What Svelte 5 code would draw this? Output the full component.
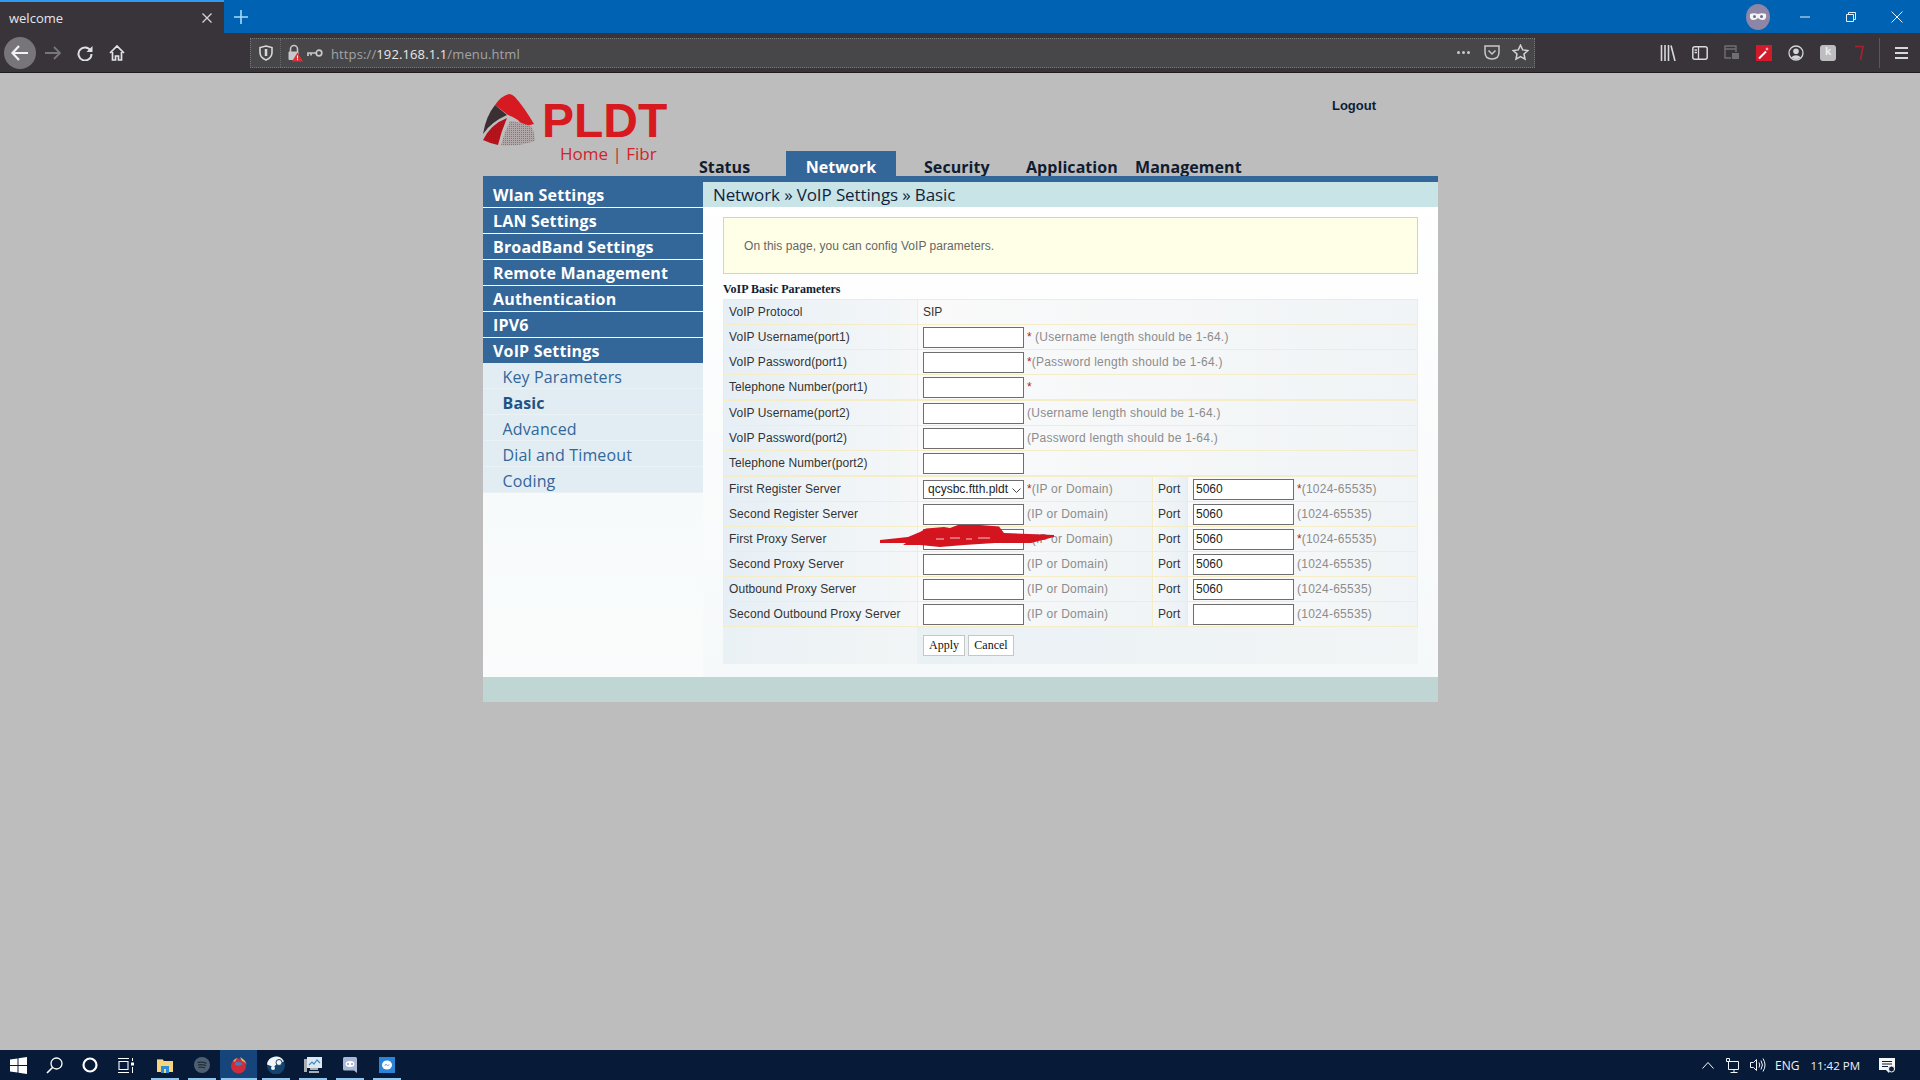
<script>
  const tabs = ['Status', 'Network', 'Security', 'Application', 'Management'];
  const menu = ['Wlan Settings', 'LAN Settings', 'BroadBand Settings', 'Remote Management', 'Authentication', 'IPV6', 'VoIP Settings'];
  const submenu = ['Key Parameters', 'Basic', 'Advanced', 'Dial and Timeout', 'Coding'];

  const accountRows = [
    { label: 'VoIP Username(port1)', star: '* ', hint: '(Username length should be 1-64.)' },
    { label: 'VoIP Password(port1)', star: '*', hint: '(Password length should be 1-64.)' },
    { label: 'Telephone Number(port1)', star: '*', hint: '', end: true },
    { label: 'VoIP Username(port2)', star: '', hint: '(Username length should be 1-64.)' },
    { label: 'VoIP Password(port2)', star: '', hint: '(Password length should be 1-64.)' },
    { label: 'Telephone Number(port2)', star: '', hint: '', end: true }
  ];

  const serverRows = [
    { label: 'First Register Server', star: true, port: '5060', select: true },
    { label: 'Second Register Server', star: false, port: '5060' },
    { label: 'First Proxy Server', star: true, port: '5060' },
    { label: 'Second Proxy Server', star: false, port: '5060' },
    { label: 'Outbound Proxy Server', star: false, port: '5060' },
    { label: 'Second Outbound Proxy Server', star: false, port: '' }
  ];

  // running-app underlines on the taskbar
  const docks = [151, 188, 221, 262, 299, 336, 373];
</script>

<div class="screen">
  <div class="tabstrip">
    <div class="tab">
      <span class="tab-title">welcome</span>
      <svg class="tab-close" width="12" height="12" viewBox="0 0 12 12"><path d="M1.5 1.5l9 9M10.5 1.5l-9 9" stroke="#d4d4d6" stroke-width="1.3"/></svg>
    </div>
    <svg class="newtab" width="14" height="14" viewBox="0 0 14 14"><path d="M7 0v14M0 7h14" stroke="#a5ddfb" stroke-width="1.6"/></svg>
    <div class="grow"></div>
    <svg class="mask" width="24" height="26" viewBox="0 0 24 26">
      <ellipse cx="12" cy="13" rx="12" ry="13" fill="#8d86a6"/>
      <path d="M4 10q4-1.500 8 0q4-1.500 8 0q1 6-3.500 6q-2.500 0-4.500-2q-2 2-4.500 2q-4.500 0-3.500-6z" fill="#f4f4f6"/>
      <circle cx="8.500" cy="12.500" r="1.500" fill="#6f6a88"/><circle cx="15.500" cy="12.500" r="1.500" fill="#6f6a88"/>
    </svg>
    <div class="winbtn"><svg width="12" height="12" viewBox="0 0 12 12"><path d="M1 6h10" stroke="#e6eef6" stroke-width="1"/></svg></div>
    <div class="winbtn"><svg width="12" height="12" viewBox="0 0 12 12"><path d="M1.500 3.500h7v7h-7zM3.500 3.500v-2h7v7h-2" fill="none" stroke="#e6eef6" stroke-width="1"/></svg></div>
    <div class="winbtn"><svg width="12" height="12" viewBox="0 0 12 12"><path d="M.5.500l11 11M11.500.500l-11 11" stroke="#e6eef6" stroke-width="1"/></svg></div>
  </div>

  <div class="navbar">
    <div class="tool back">
      <svg width="18" height="16" viewBox="0 0 18 16"><path d="M8 1L1.500 8L8 15M2 8h15" fill="none" stroke="#f2f2f2" stroke-width="2.200"/></svg>
    </div>
    <div class="tool">
      <svg width="16" height="14" viewBox="0 0 16 14"><path d="M9 1l6 6l-6 6M15 7H0" fill="none" stroke="#77777a" stroke-width="1.800"/></svg>
    </div>
    <div class="tool">
      <svg width="16" height="16" viewBox="0 0 16 16"><path d="M13.500 5.500A6.500 6.500 0 1 0 14.500 9" fill="none" stroke="#e0e0e2" stroke-width="2"/><path d="M15.500 1v6h-6z" fill="#e0e0e2"/></svg>
    </div>
    <div class="tool">
      <svg width="16" height="16" viewBox="0 0 16 16"><path d="M1 8l7-7l7 7M3.500 7v8h3v-4h3v4h3v-8" fill="none" stroke="#e4e4e6" stroke-width="1.700"/></svg>
    </div>

    <div class="urlbar">
      <div class="url-shield">
        <svg width="14" height="16" viewBox="0 0 14 16"><path d="M7 1l6 1.500v5q0 5-6 7.500q-6-2.500-6-7.500v-5z" fill="none" stroke="#d8d8da" stroke-width="1.600"/><path d="M7 4v7" stroke="#d8d8da" stroke-width="2.500"/></svg>
      </div>
      <svg class="url-lock" width="16" height="18" viewBox="0 0 16 18">
        <path d="M3.500 8V5a3.500 3.500 0 0 1 7 0v3" fill="none" stroke="#c8c8ca" stroke-width="1.600"/>
        <rect x="1.500" y="7.500" width="10" height="8.500" rx="1" fill="#c8c8ca"/>
        <path d="M10.500 8.500l5.500 9h-11z" fill="#d8323c"/><path d="M10.500 11.500v3M10.500 15.200v1" stroke="#fff" stroke-width="1"/>
      </svg>
      <svg class="url-key" width="16" height="10" viewBox="0 0 16 10"><circle cx="12" cy="5" r="2.800" fill="none" stroke="#c8c8ca" stroke-width="1.700"/><path d="M9 5H1v3M4 5v2.500" fill="none" stroke="#c8c8ca" stroke-width="1.700"/></svg>
      <span class="url-text">https://<b>192.168.1.1</b>/menu.html</span>
      <div class="grow"></div>
      <span class="url-dots"><i></i><i></i><i></i></span>
      <svg class="url-act" width="16" height="15" viewBox="0 0 16 15"><path d="M1 1h14v6q0 7-7 7t-7-7z" fill="none" stroke="#c9c9cb" stroke-width="1.500"/><path d="M4.500 5.500L8 9l3.500-3.500" fill="none" stroke="#c9c9cb" stroke-width="1.500"/></svg>
      <svg class="url-act last" width="17" height="17" viewBox="0 0 17 17"><path d="M8.500 1.200l2.200 4.700l5.100.6l-3.800 3.500l1 5.100l-4.500-2.600l-4.500 2.600l1-5.100L1.200 6.500l5.100-.6z" fill="none" stroke="#d4d4d6" stroke-width="1.500"/></svg>
    </div>

    <div class="tools-right">
      <div class="tool"><svg width="16" height="16" viewBox="0 0 16 16"><path d="M1.500 0v16M5 0v16M8.500 0v16M11 .500l4 15.500" stroke="#d8d8da" stroke-width="1.600"/></svg></div>
      <div class="tool"><svg width="16" height="14" viewBox="0 0 16 14"><rect x=".800" y=".800" width="14.400" height="12.400" rx="2" fill="none" stroke="#d8d8da" stroke-width="1.500"/><path d="M6.500 1v12M2.500 4h2.500M2.500 6.500h2.500" stroke="#d8d8da" stroke-width="1.300"/></svg></div>
      <div class="tool"><svg width="16" height="15" viewBox="0 0 16 15"><path d="M7 13H1V1h11v6M1 4h11" fill="none" stroke="#6f6f72" stroke-width="1.400"/><rect x="8" y="8" width="7" height="6" fill="#6f6f72"/></svg></div>
      <div class="tool"><div class="ext-red"><svg width="16" height="16" viewBox="0 0 16 16"><path d="M3 13.500l7-7" stroke="#fff" stroke-width="2"/><path d="M11 2l.6 1.600L13 4l-1.400.6L11 6l-.6-1.400L9 4l1.400-.4z" fill="#f6d9d9"/></svg></div></div>
      <div class="tool"><svg width="16" height="16" viewBox="0 0 16 16"><circle cx="8" cy="8" r="7" fill="none" stroke="#d4d4d6" stroke-width="1.300"/><circle cx="8" cy="6.300" r="2.800" fill="#d4d4d6"/><path d="M3 12.500q5-4.500 10 0q-5 3.500-10 0z" fill="#d4d4d6"/></svg></div>
      <div class="tool"><div class="ext-grey"><span>k</span></div></div>
      <div class="tool"><svg width="12" height="16" viewBox="0 0 12 16"><path d="M1 1.500h8L6.500 15" fill="none" stroke="#a5222c" stroke-width="1.700"/></svg></div>
      <div class="divider"></div>
      <div class="tool burger"><i></i><i></i><i></i></div>
    </div>
  </div>

  <div class="page">
    <div class="router">
      <header class="head">
        <div class="logo">
          <svg class="mark" width="54" height="53" viewBox="0 0 54 53">
            <defs>
              <pattern id="dotsRed" width="2" height="2" patternUnits="userSpaceOnUse"><rect width="2" height="2" fill="#b5141d"/><rect width="1" height="1" fill="#5c3335"/></pattern>
              <pattern id="dotsGrey" width="2" height="2" patternUnits="userSpaceOnUse"><rect width="2" height="2" fill="#b0a8a8"/><rect width="1" height="1" fill="#8a7678"/></pattern>
            </defs>
            <path d="M26 0q3 0 6 3q9 10 19 27q-5 1-10 3Q35 24 25 21L12 11Q18 2 26 0z" fill="#d71921"/>
            <path d="M12 11L24 21Q8 28 0 40Q3 22 12 11z" fill="#3a3033"/>
            <path d="M24 24Q18 38 15 51Q6 49 0 46Q8 30 24 24z" fill="url(#dotsRed)"/>
            <path d="M27 27q12 1 22 6q3 7 3 14q-18 6-34 4q3-12 9-24z" fill="url(#dotsGrey)"/>
          </svg>
          <div class="wordmark">
            <div class="pldt">PLDT</div>
            <div class="fibr">Home | Fibr</div>
          </div>
        </div>
        <div class="head-right">
          <span class="logout">Logout</span>
          <nav class="tabs">
            {#each tabs as t}
              <span class="toptab" class:active={t === 'Network'}>{t}</span>
            {/each}
          </nav>
        </div>
      </header>

      <div class="body">
        <aside class="side">
          {#each menu as m}
            <div class="side-item">{m}</div>
          {/each}
          {#each submenu as s}
            <div class="side-sub" class:current={s === 'Basic'}>{s}</div>
          {/each}
        </aside>

        <main class="main">
          <div class="crumb">Network » VoIP Settings » Basic</div>
          <div class="panel">
            <div class="notice">On this page, you can config VoIP parameters.</div>
            <h3 class="section">VoIP Basic Parameters</h3>
            <div class="table-wrap">
              <table>
                <colgroup><col class="c1" /><col class="c2" /><col class="c3" /><col /></colgroup>
                <tbody>
                  <tr>
                    <td class="lab">VoIP Protocol</td>
                    <td class="val" colspan="3">SIP</td>
                  </tr>
                  {#each accountRows as r}
                    <tr class:end={r.end}>
                      <td class="lab">{r.label}</td>
                      <td class="val" colspan="3">
                        <div class="field">
                          <input type="text" />
                          <span class="star">{r.star}</span><span class="hint">{r.hint}</span>
                        </div>
                      </td>
                    </tr>
                  {/each}
                  {#each serverRows as r}
                    <tr>
                      <td class="lab">{r.label}</td>
                      <td class="val">
                        <div class="field">
                          {#if r.select}
                            <div class="select-box">
                              <select><option>qcysbc.ftth.pldt.com.ph</option></select>
                              <svg width="9" height="6" viewBox="0 0 9 6"><path d="M.5.500l4 4l4-4" fill="none" stroke="#444" stroke-width="1"/></svg>
                            </div>
                          {:else}
                            <input type="text" />
                          {/if}
                          <span class="star">{r.star ? '*' : ''}</span><span class="hint">(IP or Domain)</span>
                        </div>
                      </td>
                      <td class="lab port">Port</td>
                      <td class="val">
                        <div class="field">
                          <input type="text" value={r.port} />
                          <span class="star">{r.star ? '*' : ''}</span><span class="hint">(1024-65535)</span>
                        </div>
                      </td>
                    </tr>
                  {/each}
                  <tr class="actions">
                    <td></td>
                    <td colspan="3">
                      <div class="btns">
                        <button>Apply</button>
                        <button>Cancel</button>
                      </div>
                    </td>
                  </tr>
                </tbody>
              </table>
              <!-- red marker scribble over the proxy address -->
              <svg class="scribble" width="174" height="22" viewBox="0 0 174 22">
                <path d="M0 15L28 12L40 7L46 3.500L64 2L70 3L78 0L100 0L119 1.500L124 8L174 10L174 12L151 18L115 18L84 20L60 22L40 20L23 20L26 18L0 18z" fill="#d4141f"/>
                <path d="M56 14l8 0M70 13l10 0M86 14l6 0M98 13l12 0" stroke="#f0c8cb" stroke-width="1"/>
              </svg>
            </div>
          </div>
        </main>
      </div>
      <div class="foot"></div>
    </div>
  </div>

  <div class="taskbar">
    <div class="task"><svg width="17" height="17" viewBox="0 0 17 17"><path d="M0 2.500L7.500 1.400V8H0zM8.500 1.300L17 0v8H8.500zM0 9h7.500v6.600L0 14.500zM8.500 9H17v8l-8.500-1.300z" fill="#fff"/></svg></div>
    <div class="task"><svg width="17" height="17" viewBox="0 0 17 17"><circle cx="10.500" cy="6.500" r="5.500" fill="none" stroke="#fff" stroke-width="1.300"/><path d="M6.500 10.500L1 16" stroke="#fff" stroke-width="1.600"/></svg></div>
    <div class="task"><svg width="16" height="16" viewBox="0 0 16 16"><circle cx="8" cy="8" r="6.500" fill="none" stroke="#fff" stroke-width="2.200"/></svg></div>
    <div class="task"><svg width="16" height="15" viewBox="0 0 16 15"><path d="M0 .500h11M0 14.500h11M1 3.500h9v8H1z" fill="none" stroke="#fff" stroke-width="1.100"/><rect x="13" y="4.500" width="3" height="3" fill="#fff"/><path d="M14.500 0v3M14.500 9v6" stroke="#fff" stroke-width="1"/></svg></div>
    <div class="task app first"><svg width="18" height="15" viewBox="0 0 18 15"><path d="M1 1h5l2 2h9v11H1z" fill="#f6d57f"/><path d="M1 1h5l1 1H1z" fill="#e8734a"/><rect x="5" y="8" width="8" height="7" fill="#2c8fd8"/><rect x="8" y="11" width="2" height="4" fill="#f6d57f"/></svg></div>
    <div class="task app"><svg width="16" height="16" viewBox="0 0 16 16"><circle cx="8" cy="8" r="8" fill="#4e5f72"/><path d="M3.500 5.500q4.500-1.200 9 .8M4 8q4-1 8 .7M4.500 10.500q3.500-.8 6.500.5" fill="none" stroke="#22303e" stroke-width="1.300"/></svg></div>
    <div class="task app active"><svg width="18" height="18" viewBox="0 0 18 18"><circle cx="8.500" cy="10" r="7.500" fill="#cf2b3a"/><path d="M5 7q4-3 8 1q-3 3-8 1z" fill="#4f78b8"/><path d="M10 1q6 3 7 9q-1-4-5-5q-1-2-2-4z" fill="#f0b658"/><path d="M3 5q2-3 5-3q-2 1-3 4z" fill="#e8a24a"/></svg></div>
    <div class="task app"><svg width="18" height="18" viewBox="0 0 18 18"><path d="M0 10.500A9 9 0 1 0 .8 5.500z" fill="#12446f"/><path d="M0 8.500A9 9 0 0 1 17 5.500L11 7L6.500 11z" fill="#f2f5f8"/><circle cx="12" cy="6.500" r="3" fill="#f2f5f8" stroke="#12446f"/><circle cx="6" cy="12" r="2" fill="#f2f5f8"/></svg></div>
    <div class="task app"><svg width="18" height="18" viewBox="0 0 18 18"><rect x="3" y="1" width="15" height="11" fill="#dfe8ee"/><path d="M5 9l3-3l2 2l3-4l3 3" fill="none" stroke="#3d8fc9" stroke-width="1.200"/><rect x="0" y="3" width="3" height="13" fill="#a9b0b4"/><path d="M6 12h8v2H6zM5 15h10v2H5z" fill="#a9b0b4"/></svg></div>
    <div class="task app"><svg width="14" height="16" viewBox="0 0 14 16"><path d="M1.500 0h11A1.500 1.500 0 0 1 14 1.500V16l-3-2.500H1.500A1.500 1.500 0 0 1 0 12V1.500A1.500 1.500 0 0 1 1.500 0z" fill="#aab7d8"/><ellipse cx="7" cy="7" rx="4.500" ry="3" fill="#fff"/><circle cx="5" cy="7" r="1" fill="#8b9cc6"/><circle cx="9" cy="7" r="1" fill="#8b9cc6"/></svg></div>
    <div class="task app"><svg width="16" height="16" viewBox="0 0 16 16"><rect width="16" height="16" fill="#2b84d8"/><ellipse cx="8" cy="8" rx="5" ry="4.500" fill="#fff"/><path d="M5 9l2-2l1.500 1.200L11 7L9 9L7.500 8z" fill="#2b84d8"/></svg></div>
    <div class="grow"></div>
    <svg class="tray caret" width="12" height="7" viewBox="0 0 12 7"><path d="M.5 6.500l5.500-6l5.500 6" fill="none" stroke="#fff" stroke-width="1"/></svg>
    <svg class="tray net" width="16" height="15" viewBox="0 0 16 15"><path d="M3.500 3.500V.500h-3v3h12v8h-10v-8M8 11.500v3M4.500 14.500h7" fill="none" stroke="#f0f3f7" stroke-width="1"/></svg>
    <svg class="tray vol" width="16" height="14" viewBox="0 0 16 14"><path d="M.5 4.500h3l3-3v11l-3-3h-3zM9 4.500q1.500 2.500 0 5M11 2.500q2.800 4.500 0 9M13 .500q4 6.500 0 13" fill="none" stroke="#f0f3f7" stroke-width="1"/></svg>
    <span class="tray-text eng">ENG</span>
    <span class="tray-text clock">11:42 PM</span>
    <svg class="tray notif" width="16" height="15" viewBox="0 0 16 15"><path d="M0 0h16v12h-5l-1 3l-3-3H0z" fill="#f4f6f8"/><path d="M3 3.500h10M3 6h10M3 8.500h6" stroke="#0a1c38" stroke-width="1"/><circle cx="12.500" cy="11" r="3" fill="#0a1c38" stroke="#f4f6f8"/></svg>
    {#each docks as left, i}
      <span class="dock" class:wide={i === 2} style="left: {left}px"></span>
    {/each}
  </div>
</div>

<style>
  :global(body) {
    margin: 0;
    background: #bdbdbd;
  }

  .screen {
    position: relative;
    width: 1920px;
    height: 1080px;
    display: flex;
    flex-direction: column;
    overflow: hidden;
    font-family: "Liberation Sans", Arial, sans-serif;
  }

  .grow { flex: 1; }

  /* browser chrome */
  .tabstrip {
    height: 33px;
    background: #0062b3;
    display: flex;
    align-items: center;
    flex: none;
  }

  .tab {
    width: 224px;
    height: 33px;
    box-sizing: border-box;
    background: #38343a;
    border-top: 2px solid #2f9bef;
    display: flex;
    align-items: center;
    justify-content: space-between;
    padding: 0 11px 0 9px;
  }

  .tab-title {
    color: #e6e6e8;
    font: 13px "Open Sans", sans-serif;
  }

  .newtab { margin-left: 10px; }

  .mask { margin-right: 12px; }

  .winbtn {
    width: 46px;
    display: flex;
    justify-content: center;
    height: 33px;
    align-items: center;
  }

  .navbar {
    height: 40px;
    box-sizing: border-box;
    background: #38343a;
    border-bottom: 1px solid #1c1b1e;
    display: flex;
    align-items: center;
    padding-left: 4px;
    flex: none;
  }

  .tool {
    width: 32px;
    height: 32px;
    display: flex;
    align-items: center;
    justify-content: center;
    flex: none;
  }

  .back {
    background: #77757a;
    border-radius: 50%;
    margin-right: 1px;
  }

  .urlbar {
    margin-left: 117px;
    width: 1285px;
    height: 30px;
    box-sizing: border-box;
    background: #474749;
    border: 1px dotted #77777a;
    display: flex;
    align-items: center;
    flex: none;
  }

  .url-shield {
    width: 29px;
    height: 28px;
    border-right: 1px dotted #66666a;
    display: flex;
    align-items: center;
    justify-content: center;
  }

  .url-lock { margin-left: 6px; }
  .url-key { margin-left: 4px; }

  .url-text {
    margin-left: 8px;
    padding-top: 2px;
    color: #a3a3a6;
    font: 13px "Open Sans", sans-serif;
    letter-spacing: 0.12px;
  }

  .url-text b {
    color: #e8e8ea;
    font-weight: 400;
  }

  .url-dots {
    display: flex;
    gap: 2px;
    margin-right: 14px;
  }

  .url-dots i {
    width: 3px;
    height: 3px;
    border-radius: 50%;
    background: #c9c9cb;
  }

  .url-act { margin-right: 12px; }
  .url-act.last { margin-right: 5px; }

  .tools-right {
    margin-left: 117px;
    display: flex;
    align-items: center;
  }

  .ext-red {
    width: 16px;
    height: 16px;
    background: #d11a2a;
  }

  .ext-grey {
    width: 16px;
    height: 16px;
    border-radius: 3px;
    background: #bdbdc0;
    color: #eee;
    font: bold 11px "Liberation Sans", sans-serif;
    text-align: center;
  }

  .divider {
    width: 1px;
    height: 30px;
    background: #58575b;
    margin: 0 5px 0 3px;
  }

  .burger {
    flex-direction: column;
    gap: 3px;
  }

  .burger i {
    width: 13px;
    height: 2px;
    background: #d8d8da;
  }

  /* router page */
  .page {
    flex: 1;
    background: #bdbdbd;
  }

  .router {
    width: 955px;
    margin-left: 483px;
  }

  .head {
    height: 103px;
    display: flex;
  }

  .logo {
    width: 216px;
    flex: none;
    box-sizing: border-box;
    padding-top: 21px;
    display: flex;
    gap: 5px;
  }

  .pldt {
    color: #d71920;
    font: bold 48px/36px "Liberation Sans", sans-serif;
    margin-top: 9px;
  }

  .fibr {
    color: #d2232a;
    font: 17px/20px "Open Sans", sans-serif;
    margin: 5px 0 0 18px;
    white-space: nowrap;
  }

  .head-right {
    flex: 1;
    display: flex;
    flex-direction: column;
  }

  .logout {
    align-self: flex-end;
    margin: 25px 62px 0 0;
    font-size: 13px;
    font-weight: bold;
    color: #0b1d3a;
    line-height: 15px;
  }

  .tabs {
    margin-top: auto;
    display: grid;
    grid-template-columns: 87px 110px 130px 109px auto;
    height: 25px;
  }

  .toptab {
    box-sizing: border-box;
    height: 25px;
    font: bold 16px/19px "Open Sans", sans-serif;
    letter-spacing: 0.06px;
    color: #101c30;
    padding-top: 7px;
    white-space: nowrap;
  }

  .toptab:nth-child(3) { padding-left: 28px; }

  .toptab.active {
    background: #336699;
    color: #fff;
    text-align: center;
  }

  .body {
    display: flex;
    background: #fff;
    height: 501px;
  }

  .side {
    width: 220px;
    flex: none;
    background: linear-gradient(#f2f6f8, #fafcfc);
  }

  .side-item {
    height: 25px;
    box-sizing: content-box;
    border-bottom: 1px solid #fff;
    background: #336699;
    color: #fff;
    font: bold 16px/27px "Open Sans", sans-serif;
    letter-spacing: 0.17px;
    padding-left: 10px;
  }

  .side-item:first-child {
    padding-top: 6px;
  }

  .side-item:nth-child(7) {
    border-bottom: 0;
  }

  .side-sub {
    height: 25px;
    border-bottom: 1px solid #eaf2f5;
    background: #e2edf3;
    color: #336699;
    font: 16px/28px "Open Sans", sans-serif;
    letter-spacing: 0.15px;
    padding-left: 19.5px;
  }

  .side-sub.current {
    font-weight: bold;
    color: #1f5383;
  }

  .main {
    flex: 1;
    border-top: 6px solid #336699;
    background: linear-gradient(#ffffff, #f6f9fa);
  }

  .crumb {
    height: 25px;
    background: #c9e4e7;
    color: #121f3d;
    font: 17px/26px "Open Sans", sans-serif;
    letter-spacing: -0.12px;
    padding-left: 10px;
  }

  .panel {
    padding: 10px 20px 0;
  }

  .notice {
    height: 57px;
    box-sizing: border-box;
    border: 1px solid #c8d9c6;
    background: #ffffe8;
    color: #666;
    font-size: 12px;
    letter-spacing: 0.05px;
    line-height: 57px;
    padding-left: 20px;
  }

  .section {
    margin: 8px 0 0;
    height: 17px;
    font: bold 12px/15px "Liberation Serif", serif;
    color: #0f1c33;
  }

  .table-wrap {
    position: relative;
  }

  table {
    width: 695px;
    table-layout: fixed;
    border-collapse: separate;
    border-spacing: 0;
    font-size: 12px;
    color: #333;
  }

  .c1 { width: 194px; }
  .c2 { width: 235px; }
  .c3 { width: 35px; }

  td {
    height: 24px;
    padding: 0;
    border-bottom: 1px solid #f5ecc8;
  }

  tr:first-child td {
    border-top: 1px solid #f5ecc8;
  }

  tr.end td {
    border-bottom-width: 2px;
  }

  .lab {
    padding-left: 5px;
    background: linear-gradient(90deg, #e6eff5, #f5f7f8);
    border-left: 1px solid #f5ecc8;
    white-space: nowrap;
    letter-spacing: 0.08px;
  }

  .port {
    padding-left: 5px;
    background: linear-gradient(90deg, #f5f7f8, #e9f0f5);
  }

  .val {
    padding-left: 5px;
    background: linear-gradient(90deg, #fafafa, #f0f4f6);
    border-left: 1px solid #f5ecc8;
    border-right: 0;
  }

  .val:last-child {
    border-right: 1px solid #f5ecc8;
  }

  .field {
    display: flex;
    align-items: center;
    white-space: nowrap;
  }

  input {
    width: 101px;
    height: 21px;
    box-sizing: border-box;
    border: 1px solid #6e6e6e;
    background: #fff;
    padding: 0 2px;
    margin: 0;
    font: 12px "Liberation Sans", sans-serif;
    color: #222;
    border-radius: 0;
    outline: none;
  }

  .select-box {
    position: relative;
    width: 101px;
    height: 19px;
  }

  .select-box select {
    appearance: none;
    width: 101px;
    height: 19px;
    box-sizing: border-box;
    border: 1px solid #6e6e6e;
    background: #fff;
    padding: 0 14px 0 4px;
    margin: 0;
    font: 12px "Liberation Sans", sans-serif;
    color: #222;
    border-radius: 0;
  }

  .select-box svg {
    position: absolute;
    right: 3px;
    top: 8px;
  }

  .star {
    color: #b5232a;
    margin-left: 3px;
    white-space: pre;
  }

  .hint {
    color: #8c8c8c;
    letter-spacing: 0.25px;
  }

  .actions td {
    height: 37px;
    border-bottom: 0;
    background: linear-gradient(90deg, #eaf1f5, #f2f5f6);
  }

  .actions td + td {
    padding-left: 6px;
  }

  .btns {
    display: flex;
    gap: 3px;
  }

  button {
    height: 21px;
    box-sizing: border-box;
    padding: 0;
    width: 42px;
    background: #fff;
    border: 1px solid #c6c6c6;
    font: 12px "Liberation Serif", serif;
    color: #111;
  }

  button + button {
    width: 46px;
  }

  .scribble {
    position: absolute;
    left: 157px;
    top: 226px;
  }

  .foot {
    height: 25px;
    background: #bfd6d4;
  }

  /* windows taskbar */
  .taskbar {
    position: relative;
    height: 30px;
    flex: none;
    background: #071a38;
    display: flex;
    align-items: center;
  }

  .task {
    width: 36px;
    height: 30px;
    display: flex;
    align-items: center;
    justify-content: center;
    flex: none;
  }

  .task.app {
    width: 37px;
  }

  .task.first {
    margin-left: 2px;
  }

  .task.active {
    background: #15457a;
  }

  .dock {
    position: absolute;
    bottom: 0;
    width: 28px;
    height: 2px;
    background: #8fc7ee;
  }

  .dock.wide { width: 36px; }

  .tray { flex: none; }
  .caret { margin-right: 12px; }
  .net { margin-right: 8px; }
  .vol { margin-right: 9px; }

  .tray-text {
    color: #eef1f5;
    font: 12px "Open Sans", sans-serif;
    white-space: nowrap;
  }

  .clock {
    margin-left: 11px;
    font-size: 11.5px;
  }

  .notif { margin: 0 25px 0 19px; }
</style>
